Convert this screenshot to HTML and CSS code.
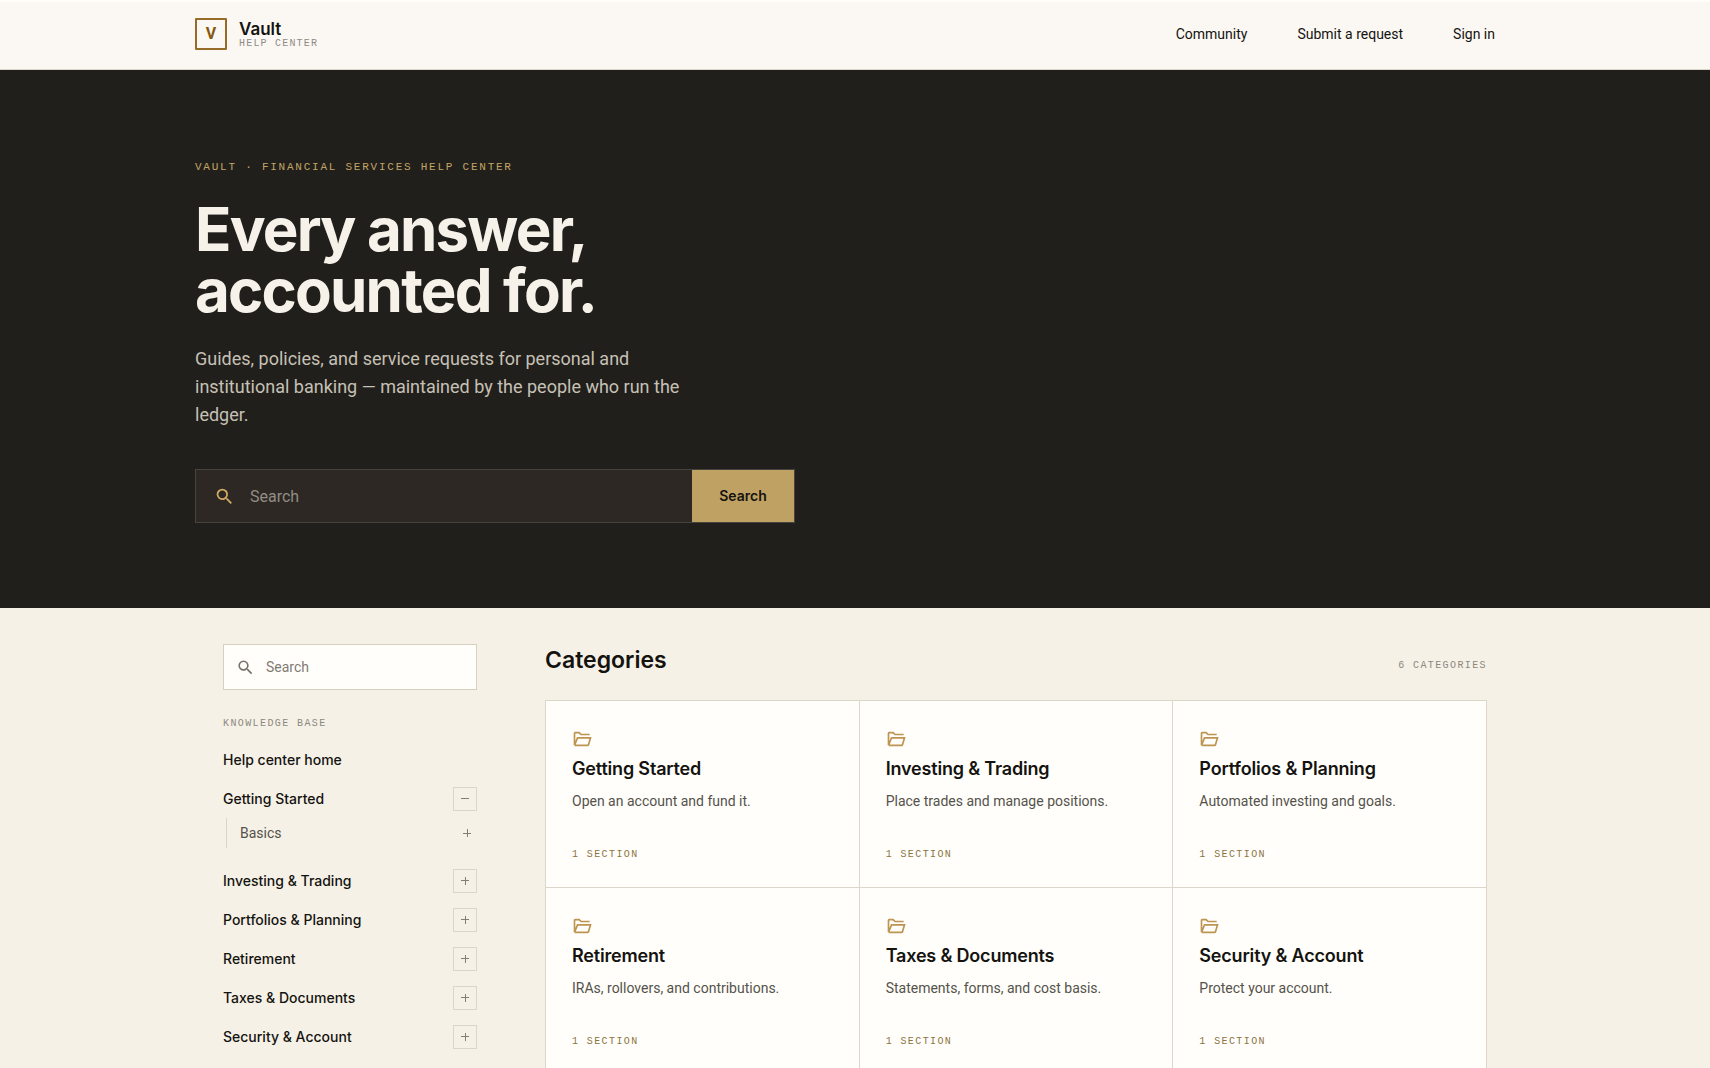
FILE: index.html
```html
<!DOCTYPE html>
<html lang="en">
<head>
    <meta charset="UTF-8">
    <meta name="viewport" content="width=device-width, initial-scale=1.0">
    <title>Vault Help Center</title>
    <link rel="stylesheet" href="styles.css">
</head>
<body>
    <svg class="sprite" aria-hidden="true">
        <symbol id="icon-search" viewBox="0 0 24 24">
            <path d="M15.5 14h-.79l-.28-.27A6.47 6.47 0 0 0 16 9.5 6.5 6.5 0 1 0 9.5 16c1.61 0 3.09-.59 4.23-1.57l.27.28v.79l5 4.99L20.49 19l-4.99-5zm-6 0C7.01 14 5 11.99 5 9.5S7.01 5 9.5 5 14 7.01 14 9.5 11.99 14 9.5 14z"/>
        </symbol>
        <symbol id="icon-folder" viewBox="0 0 24 24">
            <path d="M3 19.4V5.2q0-.8.8-.8h4.8l2.2 2.2h10.4M3.2 19.2 6.6 10.6h15.6L19.8 18.8q-.3.8-1.2.8H3.2"/>
        </symbol>
    </svg>

    <header class="header">
        <div class="container header_inner">
            <a href="#" class="logo">
                <span class="logo_mark">V</span>
                <span class="logo_text">
                    <span class="logo_name">Vault</span>
                    <span class="logo_sub">HELP CENTER</span>
                </span>
            </a>
            <nav class="nav">
                <a href="#">Community</a>
                <a href="#">Submit a request</a>
                <a href="#">Sign in</a>
            </nav>
        </div>
    </header>

    <section class="hero">
        <div class="container">
            <p class="hero_label">VAULT · FINANCIAL SERVICES HELP CENTER</p>
            <h1>Every answer,<br>accounted for.</h1>
            <p class="hero_text">Guides, policies, and service requests for personal and institutional banking — maintained by the people who run the ledger.</p>
            <form class="hero_search">
                <svg class="icon"><use href="#icon-search"/></svg>
                <input type="search" placeholder="Search" aria-label="Search">
                <button type="submit">Search</button>
            </form>
        </div>
    </section>

    <div class="container content">
        <aside class="sidebar">
            <form class="side_search">
                <svg class="icon"><use href="#icon-search"/></svg>
                <input type="search" placeholder="Search" aria-label="Search articles">
            </form>
            <p class="label side_label">KNOWLEDGE BASE</p>
            <ul class="tree">
                <li class="tree_row"><a href="#">Help center home</a></li>
                <li>
                    <div class="tree_row">
                        <a href="#">Getting Started</a>
                        <button type="button" class="toggle open" aria-label="Collapse Getting Started"></button>
                    </div>
                    <div class="tree_sub">
                        <a href="#">Basics</a>
                        <button type="button" class="toggle plain" aria-label="Expand Basics"></button>
                    </div>
                </li>
                <li class="tree_row">
                    <a href="#">Investing &amp; Trading</a>
                    <button type="button" class="toggle" aria-label="Expand Investing &amp; Trading"></button>
                </li>
                <li class="tree_row">
                    <a href="#">Portfolios &amp; Planning</a>
                    <button type="button" class="toggle" aria-label="Expand Portfolios &amp; Planning"></button>
                </li>
                <li class="tree_row">
                    <a href="#">Retirement</a>
                    <button type="button" class="toggle" aria-label="Expand Retirement"></button>
                </li>
                <li class="tree_row">
                    <a href="#">Taxes &amp; Documents</a>
                    <button type="button" class="toggle" aria-label="Expand Taxes &amp; Documents"></button>
                </li>
                <li class="tree_row">
                    <a href="#">Security &amp; Account</a>
                    <button type="button" class="toggle" aria-label="Expand Security &amp; Account"></button>
                </li>
            </ul>
        </aside>

        <main class="main">
            <div class="main_head">
                <h2>Categories</h2>
                <span class="label">6 CATEGORIES</span>
            </div>
            <div class="cards">
                <a href="#" class="card">
                    <svg class="icon"><use href="#icon-folder"/></svg>
                    <h3>Getting Started</h3>
                    <p>Open an account and fund it.</p>
                    <span class="label">1 SECTION</span>
                </a>
                <a href="#" class="card">
                    <svg class="icon"><use href="#icon-folder"/></svg>
                    <h3>Investing &amp; Trading</h3>
                    <p>Place trades and manage positions.</p>
                    <span class="label">1 SECTION</span>
                </a>
                <a href="#" class="card">
                    <svg class="icon"><use href="#icon-folder"/></svg>
                    <h3>Portfolios &amp; Planning</h3>
                    <p>Automated investing and goals.</p>
                    <span class="label">1 SECTION</span>
                </a>
                <a href="#" class="card">
                    <svg class="icon"><use href="#icon-folder"/></svg>
                    <h3>Retirement</h3>
                    <p>IRAs, rollovers, and contributions.</p>
                    <span class="label">1 SECTION</span>
                </a>
                <a href="#" class="card">
                    <svg class="icon"><use href="#icon-folder"/></svg>
                    <h3>Taxes &amp; Documents</h3>
                    <p>Statements, forms, and cost basis.</p>
                    <span class="label">1 SECTION</span>
                </a>
                <a href="#" class="card">
                    <svg class="icon"><use href="#icon-folder"/></svg>
                    <h3>Security &amp; Account</h3>
                    <p>Protect your account.</p>
                    <span class="label">1 SECTION</span>
                </a>
            </div>
        </main>
    </div>
</body>
</html>
```
FILE: styles.css
```css
* {
    margin: 0;
    padding: 0;
    box-sizing: border-box;
}

body {
    background-color: #f5f1e7;
    color: #14130f;
    font-family: Roboto, "Liberation Sans", sans-serif;
    font-size: 14px;
    line-height: 20px;
}

a {
    color: inherit;
    text-decoration: none;
}

ul {
    list-style: none;
}

button, input {
    font: inherit;
    border: none;
    outline: none;
    background: none;
}

button {
    cursor: pointer;
}

h1, h2, h3 {
    font-family: Inter, sans-serif;
    font-weight: 600;
}

.sprite {
    display: none;
}

.icon {
    flex: none;
    fill: currentColor;
}

.label {
    font-family: "Liberation Mono", monospace;
    font-size: 10px;
    line-height: 16px;
    letter-spacing: 0.14em;
    color: #8c887e;
}

.container {
    max-width: 1320px;
    margin: 0 auto;
}

/* header */

.header {
    border-top: 2px solid #fffefb;
    border-bottom: 1px solid #dcd6c8;
    background-color: #fbf8f3;
}

.header_inner {
    display: flex;
    justify-content: space-between;
    align-items: center;
    padding: 16px 0 19px;
}

.logo {
    display: flex;
    align-items: center;
    gap: 12px;
}

.logo_mark {
    width: 32px;
    height: 32px;
    border: 2px solid #976c28;
    border-radius: 1px;
    color: #865810;
    font-size: 16px;
    font-weight: 700;
    line-height: 28px;
    text-align: center;
}

.logo_text {
    display: flex;
    flex-direction: column;
    padding-top: 2px;
}

.logo_name {
    font-family: Inter, sans-serif;
    font-size: 17px;
    font-weight: 600;
    line-height: 18px;
}

.logo_sub {
    font-family: "Liberation Mono", monospace;
    font-size: 10px;
    line-height: 12px;
    letter-spacing: 0.12em;
    color: #8f8b84;
}

.nav {
    display: flex;
    gap: 10px;
}

.nav a {
    padding: 0 20px;
}

/* hero */

.hero {
    padding: 89px 0 85px;
    background-color: #211f1b;
    color: #f6f2ea;
}

.hero_label {
    margin-bottom: 24px;
    font-family: "Liberation Mono", monospace;
    font-size: 11px;
    line-height: 16px;
    letter-spacing: 0.16em;
    color: #c1a564;
}

.hero h1 {
    margin-bottom: 24px;
    font-size: 60px;
    font-weight: 700;
    line-height: 61px;
    letter-spacing: -0.03em;
}

.hero_text {
    max-width: 520px;
    margin-bottom: 40px;
    font-size: 18px;
    line-height: 28px;
    color: #c6c1b6;
}

.hero_search {
    display: flex;
    align-items: center;
    max-width: 600px;
    height: 54px;
    padding-left: 18px;
    border: 1px solid #46433d;
    background-color: #2d2824;
}

.hero_search .icon {
    width: 21px;
    height: 21px;
    margin-right: 15px;
    color: #d0ab62;
}

.hero_search input {
    flex: 1;
    min-width: 0;
    height: 100%;
    color: #f6f2ea;
    font-size: 16px;
}

.hero_search input::placeholder {
    color: #928d85;
}

.hero_search button {
    width: 102px;
    height: 100%;
    background-color: #bfa163;
    color: #14130f;
    font-family: Inter, sans-serif;
    font-weight: 600;
}

/* content */

.content {
    display: grid;
    grid-template-columns: 254px 1fr;
    gap: 68px;
    padding: 36px 28px 60px;
}

.side_search {
    display: flex;
    align-items: center;
    height: 46px;
    padding-left: 12px;
    border: 1px solid #d8d1c1;
    background-color: #fffefb;
}

.side_search .icon {
    width: 19px;
    height: 19px;
    margin-right: 11px;
    color: #77736b;
}

.side_search input {
    flex: 1;
    min-width: 0;
    height: 100%;
}

.side_search input::placeholder {
    color: #7f7b73;
}

.side_label {
    margin: 26px 0 8px;
}

.tree_row {
    display: flex;
    justify-content: space-between;
    align-items: center;
    height: 39px;
    font-family: Inter, sans-serif;
    font-weight: 500;
}

.tree_sub {
    display: flex;
    justify-content: space-between;
    align-items: center;
    height: 30px;
    margin: 0 0 13px 3px;
    padding-left: 13px;
    border-left: 1px solid #dcd6c8;
    color: #55524a;
}

/* plus / minus box drawn with two bars */
.toggle {
    width: 24px;
    height: 24px;
    border: 1px solid #dcd6c8;
    background:
        linear-gradient(#827e75, #827e75) center / 8px 1px no-repeat,
        linear-gradient(#827e75, #827e75) center / 1px 8px no-repeat;
}

.toggle.open {
    background: linear-gradient(#827e75, #827e75) center / 8px 1px no-repeat;
}

.toggle.plain {
    width: 20px;
    border: none;
}

.main_head {
    display: flex;
    justify-content: space-between;
    align-items: baseline;
    margin-bottom: 23px;
}

.main_head h2 {
    font-size: 23px;
    line-height: 33px;
}

.cards {
    display: grid;
    grid-template-columns: repeat(3, 1fr);
    gap: 1px;
    border: 1px solid #dcd6c8;
    background-color: #dcd6c8;
}

.card {
    display: flex;
    flex-direction: column;
    padding: 28px 26px 24px;
    background-color: #fffefb;
}

.card .icon {
    width: 20px;
    height: 20px;
    fill: none;
    stroke: #bd9450;
    stroke-width: 2;
}

.card h3 {
    margin: 8px 0 10px;
    font-size: 18px;
    line-height: 24px;
    letter-spacing: -0.01em;
}

.card p {
    margin-bottom: 36px;
    color: #55524a;
}

.card .label {
    color: #8c7440;
}
```
